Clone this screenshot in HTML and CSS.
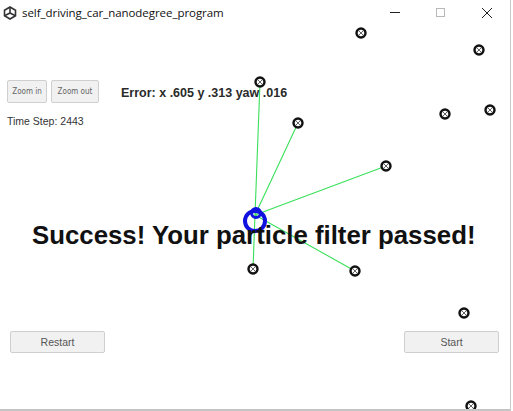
FILE: index.html
```html
<!DOCTYPE html>
<html>
<head>
<meta charset="utf-8">
<link rel="stylesheet" href="styles.css">
</head>
<body>
<div class="window">
  <svg class="map" width="513" height="411" viewBox="0 0 513 411">
    <g class="beams">
      <line x1="255" y1="215" x2="260" y2="82"/>
      <line x1="255" y1="215" x2="298" y2="123"/>
      <line x1="255" y1="215" x2="386" y2="166"/>
      <line x1="255" y1="215" x2="253" y2="269"/>
      <line x1="255" y1="215" x2="355" y2="271"/>
    </g>
    <g class="car">
      <circle cx="255" cy="221" r="10"/>
      <circle cx="256" cy="213" r="4.5" class="heading"/>
    </g>
    <g class="marks">
      <g transform="translate(361 33)"><circle r="4.5"/><path d="M-2.5 -2.5L2.5 2.5M2.5 -2.5L-2.5 2.5"/></g>
      <g transform="translate(479 50)"><circle r="4.5"/><path d="M-2.5 -2.5L2.5 2.5M2.5 -2.5L-2.5 2.5"/></g>
      <g transform="translate(260 82)"><circle r="4.5"/><path d="M-2.5 -2.5L2.5 2.5M2.5 -2.5L-2.5 2.5"/></g>
      <g transform="translate(298 123)"><circle r="4.5"/><path d="M-2.5 -2.5L2.5 2.5M2.5 -2.5L-2.5 2.5"/></g>
      <g transform="translate(445 114)"><circle r="4.5"/><path d="M-2.5 -2.5L2.5 2.5M2.5 -2.5L-2.5 2.5"/></g>
      <g transform="translate(490 110)"><circle r="4.5"/><path d="M-2.5 -2.5L2.5 2.5M2.5 -2.5L-2.5 2.5"/></g>
      <g transform="translate(386 166)"><circle r="4.5"/><path d="M-2.5 -2.5L2.5 2.5M2.5 -2.5L-2.5 2.5"/></g>
      <g transform="translate(253 269)"><circle r="4.5"/><path d="M-2.5 -2.5L2.5 2.5M2.5 -2.5L-2.5 2.5"/></g>
      <g transform="translate(355 271)"><circle r="4.5"/><path d="M-2.5 -2.5L2.5 2.5M2.5 -2.5L-2.5 2.5"/></g>
      <g transform="translate(464 313)"><circle r="4.5"/><path d="M-2.5 -2.5L2.5 2.5M2.5 -2.5L-2.5 2.5"/></g>
      <g transform="translate(471 406)"><circle r="4.5"/><path d="M-2.5 -2.5L2.5 2.5M2.5 -2.5L-2.5 2.5"/></g>
    </g>
  </svg>

  <header class="titlebar">
    <svg class="app-icon" width="14" height="14" viewBox="0 0 14 14">
      <path d="M7 1L12.5 4.2V9.8L7 13L1.5 9.8V4.2Z" fill="none" stroke="#333" stroke-width="1.6"/>
      <path d="M7 7L7 1.5M7 7L2 9.5M7 7L12 9.5" stroke="#333" stroke-width="1.6"/>
    </svg>
    <span class="title">self_driving_car_nanodegree_program</span>
    <div class="controls">
      <span class="ctl ctl-min"></span>
      <span class="ctl ctl-max"></span>
      <svg class="ctl ctl-close" width="12" height="12" viewBox="0 0 12 12"><path d="M1 1L11 11M11 1L1 11" stroke="#222" stroke-width="1"/></svg>
    </div>
  </header>

  <main class="stage">
    <div class="toolbar">
      <button class="zoom-btn zoom-in">Zoom in</button>
      <button class="zoom-btn zoom-out">Zoom out</button>
      <span class="error">Error: x .605 y .313 yaw .016</span>
    </div>
    <div class="timestep">Time Step: 2443</div>
    <div class="message">Success! Your particle filter passed!</div>
    <div class="actions">
      <button class="action-btn">Restart</button>
      <button class="action-btn">Start</button>
    </div>
  </main>
</div>
</body>
</html>
```

FILE: styles.css
```css
html, body {
  margin: 0;
  padding: 0;
  background: #ffffff;
}

.window {
  position: relative;
  width: 510px;
  height: 409px;
  border-right: 1px solid #c9c9c9;
  border-bottom: 2px solid #c4c4c4;
  display: flex;
  flex-direction: column;
  font-family: "Liberation Sans", Arial, sans-serif;
  overflow: hidden;
}

.map {
  position: absolute;
  left: 0;
  top: 0;
}

.beams line {
  stroke: #3ae05a;
  stroke-width: 1.1;
}

.car circle {
  fill: none;
  stroke: #1212e0;
  stroke-width: 4;
}

.car .heading {
  stroke-width: 3;
}

.marks circle {
  fill: #ffffff;
  stroke: #111111;
  stroke-width: 2.4;
}

.marks path {
  stroke: #555555;
  stroke-width: 0.9;
  fill: none;
}

.titlebar {
  position: relative;
  height: 25px;
  display: flex;
  align-items: center;
  padding-left: 3px;
  box-sizing: border-box;
}

.app-icon {
  flex: none;
}

.title {
  margin-left: 5px;
  font-family: "Open Sans", "Noto Sans", sans-serif;
  font-size: 11.5px;
  color: #111;
  letter-spacing: -0.05px;
}

.controls {
  margin-left: auto;
  display: flex;
  align-items: center;
  height: 25px;
}

.ctl {
  display: block;
}

.ctl-min {
  width: 10px;
  height: 1px;
  background: #222;
  margin-right: 36px;
}

.ctl-max {
  width: 9px;
  height: 9px;
  border: 1px solid #b8b8b8;
  box-sizing: border-box;
  margin-right: 36px;
}

.ctl-close {
  margin-right: 17px;
}

.stage {
  position: relative;
  flex: 1;
  display: flex;
  flex-direction: column;
  padding: 55px 0 0 7px;
}

.toolbar {
  display: flex;
  align-items: center;
  height: 23px;
}

button {
  font-family: "Liberation Sans", Arial, sans-serif;
  background: #f1f1f1;
  border: 1px solid #cfcfcf;
  border-radius: 2px;
  padding: 0;
  color: #555;
  box-sizing: border-box;
}

.zoom-btn {
  height: 23px;
  font-family: "Liberation Sans Narrow", "DejaVu Sans Condensed", "Liberation Sans", sans-serif;
  font-size: 8px;
  color: #666;
}

.zoom-in {
  width: 40px;
}

.zoom-out {
  width: 48px;
  margin-left: 4px;
}

.error {
  margin-left: 22px;
  margin-top: 3px;
  font-weight: bold;
  font-size: 12.5px;
  color: #2a2a2a;
}

.timestep {
  margin-top: 12px;
  font-size: 10.5px;
  color: #333;
}

.message {
  margin-top: 94px;
  margin-left: 25px;
  font-weight: bold;
  font-size: 25.8px;
  color: #111;
  position: relative;
}

.actions {
  margin-top: 81px;
  display: flex;
  justify-content: space-between;
  padding: 0 11px 0 3px;
}

.action-btn {
  width: 95px;
  height: 22px;
  font-size: 10.5px;
  color: #555;
}
```
